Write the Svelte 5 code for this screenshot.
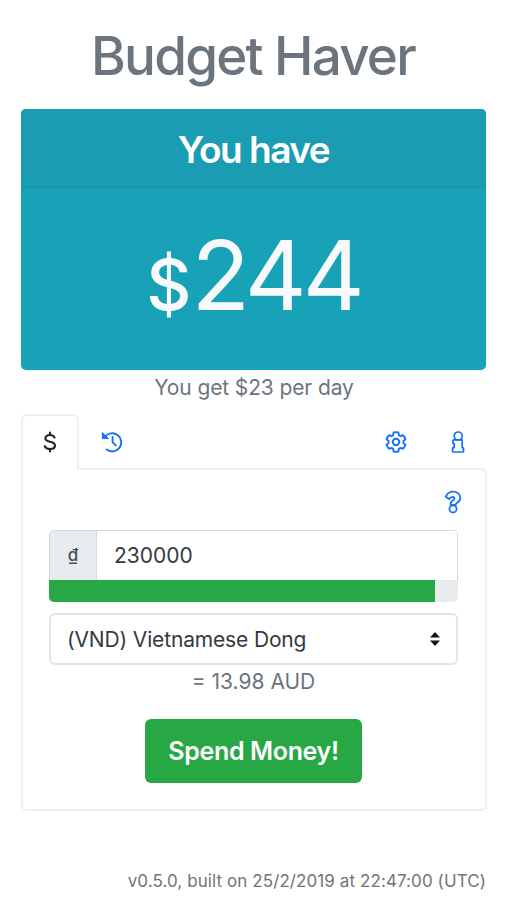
<script lang="ts">
  let balance = 244;
  let perDay = 23;
  let amount = '230000';
  let currency = 'VND';
  let remaining = 94.3;
  let converted = '13.98';

  const currencies = [
    { code: 'VND', name: 'Vietnamese Dong' },
    { code: 'AUD', name: 'Australian Dollar' },
  ];
</script>

<main>
  <h1>Budget Haver</h1>

  <section class="card">
    <h2>You have</h2>
    <div class="balance"><span class="sign">$</span><span class="number">{balance}</span></div>
  </section>
  <p class="per-day">You get ${perDay} per day</p>

  <nav>
    <button class="tab active" aria-label="Spend">
      <svg width="16" height="24" viewBox="0 0 16 24" fill="none" stroke="currentColor" stroke-width="2.1" stroke-linecap="round">
        <path d="M12.6 7.5C11.7 5.8 10.3 5 8.2 5 5.3 5 3.3 6.3 3.3 8.3c0 4.8 9.7 2.3 9.7 7.2 0 2.1-2 3.5-4.7 3.5-2.6 0-4.6-.8-5.5-2.8M8 2.6V5M8 19v2.4" />
      </svg>
    </button>
    <button class="tab" aria-label="History">
      <svg width="24" height="24" viewBox="0 0 24 24" fill="none" stroke="currentColor" stroke-width="1.9" stroke-linecap="round" stroke-linejoin="round">
        <path d="M4.8 7A9.1 9.1 0 1 1 6.6 19.5M12.6 7v5.2l3.2 3.2" />
        <path d="M2.4 2.8v5.8h5.8z" fill="currentColor" stroke-width="1" />
      </svg>
    </button>
    <span class="spacer"></span>
    <button class="tab" aria-label="Settings">
      <svg width="24" height="24" viewBox="0 0 24 24" fill="none" stroke="currentColor" stroke-width="1.9" stroke-linejoin="round">
        <path d="M9.6 2.5Q12 1.8 14.4 2.5L14.8 5.1 16.6 6.1 19 5.2Q20.8 6.9 21.4 9.3L19.4 11V13L21.4 14.7Q20.8 17.1 19 18.8L16.6 17.9 14.8 18.9 14.4 21.5Q12 22.2 9.6 21.5L9.2 18.9 7.4 17.9 5 18.8Q3.2 17.1 2.6 14.7L4.6 13V11L2.6 9.3Q3.2 6.9 5 5.2L7.4 6.1 9.2 5.1Z" />
        <circle cx="12" cy="12" r="3.2" />
      </svg>
    </button>
    <button class="tab" aria-label="Info">
      <svg width="14" height="24" viewBox="0 0 14 24" fill="none" stroke="currentColor" stroke-width="1.7" stroke-linejoin="round">
        <circle cx="7.2" cy="6" r="4" />
        <path d="M2.7 9.9h8.5v7.8h.6q.7 0 .7.7v2.9q0 .7-.7.7H2.2q-.7 0-.7-.7v-2.9q0-.7.7-.7h1v-3.9h-.5q-.7 0-.7-.7v-2.5q0-.7.7-.7z" />
      </svg>
    </button>
  </nav>

  <section class="panel">
    <button class="help" aria-label="Help">
      <svg width="18" height="24" viewBox="0 0 18 24" fill="none" stroke="currentColor" stroke-width="1.8" stroke-linejoin="round">
        <path d="M1.8 6.7C3.4 3.3 5.8 1.7 9.2 1.7c4 0 7.1 2.5 7.1 6.2 0 4.6-4.5 4.9-4.5 6.5v.5H6.6v-1c0-3.3 3.9-3.8 3.9-5.5 0-1.1-.8-1.6-1.9-1.6-1.3 0-2 .9-3.5 2.3z" />
        <circle cx="9" cy="18.9" r="3.6" />
      </svg>
    </button>

    <div class="input-group">
      <span class="prefix">₫</span>
      <input type="text" aria-label="Amount" bind:value={amount} />
    </div>
    <div class="progress">
      <div class="bar" style="width: {remaining}%"></div>
    </div>

    <div class="select">
      <select aria-label="Currency" bind:value={currency}>
        {#each currencies as c}
          <option value={c.code}>({c.code}) {c.name}</option>
        {/each}
      </select>
      <svg width="10" height="14" viewBox="0 0 10 14" fill="#111">
        <path d="M5 0l5 5.4H0zM5 14l5-5.4H0z" />
      </svg>
    </div>
    <p class="converted">= {converted} AUD</p>

    <button class="spend">Spend Money!</button>
  </section>

  <footer>v0.5.0, built on 25/2/2019 at 22:47:00 (UTC)</footer>
</main>

<style>
  :global(body) {
    background: #fff;
  }
  main {
    box-sizing: border-box;
    height: 900px;
    padding: 24px 19px 0 21px;
    font-family: Inter, "Liberation Sans", sans-serif;
    font-size: 21px;
    color: #212529;
    overflow: hidden;
  }
  h1 {
    margin: 0 2px 0 0;
    height: 85px;
    line-height: 65px;
    text-align: center;
    font-size: 53px;
    font-weight: 500;
    letter-spacing: -1.8px;
    color: #6c757d;
  }
  .card {
    height: 261px;
    box-sizing: border-box;
    margin-right: 1px;
    border-radius: 5px;
    background: #17a2b8;
    color: #fff;
    text-align: center;
    overflow: hidden;
  }
  h2 {
    box-sizing: border-box;
    margin: 0;
    height: 79px;
    line-height: 81px;
    font-size: 37px;
    font-weight: 600;
    letter-spacing: -1.5px;
    background: #1a9cb2;
    border-bottom: 1px solid #1893a8;
  }
  .balance {
    line-height: 175px;
    color: #f8f9fa;
  }
  .sign {
    font-size: 70px;
    font-weight: 500;
  }
  .number {
    font-size: 96px;
    font-weight: 400;
    letter-spacing: -4px;
  }
  .per-day {
    margin: 0;
    height: 44px;
    line-height: 35px;
    text-align: center;
    letter-spacing: -0.12px;
    color: #6c757d;
  }
  nav {
    display: flex;
    height: 54px;
  }
  button {
    padding: 0;
    border: 0;
    background: none;
    font-family: inherit;
    cursor: pointer;
  }
  .tab {
    box-sizing: border-box;
    display: flex;
    align-items: center;
    justify-content: center;
    width: 58px;
    height: 55px;
    color: #1473f5;
  }
  .tab + .tab {
    margin-left: 4px;
  }
  .tab.active {
    position: relative;
    height: 56px;
    padding-bottom: 3px;
    border: 2px solid #efeff0;
    border-bottom: 0;
    border-radius: 6px 6px 0 0;
    background: #fff;
    color: #212529;
  }
  .spacer {
    flex: 1;
  }
  .panel {
    box-sizing: border-box;
    height: 343px;
    padding: 20px 27px 0 26px;
    border: 2px solid #efeff0;
    border-radius: 0 6px 6px 6px;
  }
  .help {
    display: block;
    height: 24px;
    margin: 0 -4px 16px auto;
    color: #1473f5;
  }
  .help svg {
    display: block;
  }
  .input-group {
    box-sizing: border-box;
    display: flex;
    height: 50px;
    border: 1px solid #d5d9dd;
    border-bottom-width: 0;
    border-radius: 5px 5px 0 0;
    overflow: hidden;
  }
  .prefix {
    box-sizing: border-box;
    width: 47px;
    border-right: 1px solid #d5d9dd;
    background: #e9ecef;
    color: #495057;
    line-height: 48px;
    text-align: center;
    font-size: 17px;
    font-weight: 500;
  }
  input {
    flex: 1;
    min-width: 0;
    padding: 0 17px;
    border: 0;
    outline: 0;
    background: #fff;
    font: inherit;
    color: #343a40;
  }
  .progress {
    height: 22px;
    border-radius: 0 0 5px 5px;
    background: #e9ecef;
    overflow: hidden;
  }
  .bar {
    height: 100%;
    background: #28a745;
  }
  .select {
    box-sizing: border-box;
    display: flex;
    align-items: center;
    height: 52px;
    margin-top: 11px;
    padding-right: 16px;
    border: 2px solid #e2e4e6;
    border-radius: 6px;
  }
  select {
    appearance: none;
    flex: 1;
    height: 100%;
    padding: 0 16px;
    border: 0;
    outline: 0;
    background: none;
    font: inherit;
    letter-spacing: -0.15px;
    color: #343a40;
  }
  .converted {
    margin: 0;
    height: 54px;
    line-height: 34px;
    text-align: center;
    color: #6c757d;
  }
  .spend {
    display: block;
    width: 217px;
    height: 64px;
    margin: 0 auto;
    border-radius: 6px;
    background: #28a745;
    color: #fff;
    font-size: 25px;
    font-weight: 600;
    letter-spacing: -0.35px;
  }
  footer {
    margin: 58px 1px 0 0;
    line-height: 24px;
    text-align: right;
    font-size: 17px;
    letter-spacing: 0.09px;
    color: #6c757d;
  }
</style>
